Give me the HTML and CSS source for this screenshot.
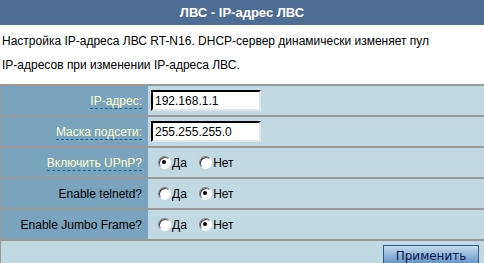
FILE: index.html
```html
<!DOCTYPE html>
<html lang="ru">
<head>
  <meta charset="UTF-8">
  <title>ЛВС - IP-адрес ЛВС</title>
  <link rel="stylesheet" href="styles.css">
</head>
<body>
  <div class="title">ЛВС - IP-адрес ЛВС</div>

  <p class="descr">Настройка IP-адреса ЛВС RT-N16. DHCP-сервер динамически изменяет пул IP-адресов при изменении IP-адреса ЛВС.</p>

  <table class="form">
    <tr>
      <th><span class="hint">IP-адрес:</span></th>
      <td><input type="text" class="field" value="192.168.1.1"></td>
    </tr>
    <tr>
      <th><span class="hint">Маска подсети:</span></th>
      <td><input type="text" class="field" value="255.255.255.0"></td>
    </tr>
    <tr>
      <th><span class="hint">Включить UPnP?</span></th>
      <td>
        <label class="opt"><input type="radio" name="upnp" checked>Да</label>
        <label class="opt"><input type="radio" name="upnp">Нет</label>
      </td>
    </tr>
    <tr>
      <th>Enable telnetd?</th>
      <td>
        <label class="opt"><input type="radio" name="telnet">Да</label>
        <label class="opt"><input type="radio" name="telnet" checked>Нет</label>
      </td>
    </tr>
    <tr>
      <th>Enable Jumbo Frame?</th>
      <td>
        <label class="opt"><input type="radio" name="jumbo">Да</label>
        <label class="opt"><input type="radio" name="jumbo" checked>Нет</label>
      </td>
    </tr>
    <tr>
      <td colspan="2" class="actions"><button class="apply">Применить</button></td>
    </tr>
  </table>
</body>
</html>
```

FILE: styles.css
```css
body {
  margin: 0;
  font-family: "Liberation Sans", Arial, sans-serif;
  font-size: 12px;
  color: #000;
  background: #fff;
}
.title {
  height: 25px;
  line-height: 25px;
  background-color: #4e6d94;
  color: #fff;
  font-weight: bold;
  font-size: 13px;
  text-align: center;
}
.descr {
  margin: 0;
  padding: 4px 2px 0 2px;
  line-height: 24px;
  width: 440px;
  height: 55px;
}
.form {
  width: 100%;
  border-collapse: collapse;
  border-top: 2px solid #999;
  border-left: 1px solid #999;
}
.form th,
.form td {
  height: 29px;
  padding: 0;
  border-bottom: 2px solid #999;
}
.form th {
  width: 141px;
  background-color: #7aa3bd;
  text-align: right;
  font-weight: normal;
  padding-right: 6px;
}
.form td {
  background-color: #c1d9e2;
  padding-left: 3px;
}
.hint {
  color: #ffffd0;
  border-bottom: 1px dashed #1e64a0;
}
.field {
  width: 102px;
  height: 15px;
  padding: 1px 2px;
  font-family: "Liberation Sans", Arial, sans-serif;
  font-size: 12px;
  border: 2px inset #ddd;
  border-top-color: #555;
  border-left-color: #555;
  border-bottom-color: #e4e4e4;
  border-right-color: #e4e4e4;
  background: #fff;
}
.opt {
  margin-right: 2px;
}
.opt input {
  appearance: none;
  -webkit-appearance: none;
  box-sizing: border-box;
  width: 13px;
  height: 13px;
  margin: 0 1px 0 7px;
  vertical-align: -2px;
  border-radius: 50%;
  border: 1px solid #fff;
  border-top-color: #808080;
  border-left-color: #808080;
  background: #fff;
  box-shadow: inset 1px 1px 0 #404040;
  position: relative;
}
.opt input:checked::after {
  content: "";
  position: absolute;
  left: 3px;
  top: 3px;
  width: 4px;
  height: 4px;
  border-radius: 50%;
  background: #000;
}
.form td.actions {
  height: 26px;
  border-bottom: none;
  text-align: right;
  padding-right: 5px;
}
.apply {
  width: 96px;
  height: 21px;
  margin-top: 3px;
  font-family: "DejaVu Sans", Verdana, sans-serif;
  font-size: 12px;
  color: #0c1452;
  border: 1px solid #2d5a8a;
  background: linear-gradient(#c4dcee, #8fb6d8 50%, #5f8fbf);
  cursor: pointer;
}
```
